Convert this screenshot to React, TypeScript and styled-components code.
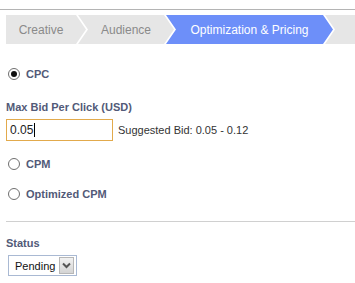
import React, { FC } from "react";
import styled, { createGlobalStyle } from "styled-components";

const GlobalStyle = createGlobalStyle`
  html, body {
    margin: 0;
    padding: 0;
    background: #ffffff;
    font-family: "Liberation Sans", Arial, sans-serif;
  }
`

const Page = styled.div`
  width: 355px;
  height: 283px;
  overflow: hidden;
  padding-top: 9px;
  box-sizing: border-box;
`

const TopRule = styled.div`
  height: 1px;
  background: #b4b4b4;
`

const TabBar = styled.div`
  display: flex;
  height: 29px;
  margin: 5px 0 0 6px;
`

const Tab = styled.div<{ $active?: boolean; $first?: boolean; $width?: number }>`
  display: flex;
  align-items: center;
  justify-content: center;
  box-sizing: border-box;
  height: 100%;
  flex: ${p => (p.$width ? `0 0 ${p.$width}px` : "1 1 auto")};
  margin-left: ${p => (p.$first ? "0" : "-8px")};
  padding: 0 10px 0 ${p => (p.$first ? "0" : "10px")};
  background: ${p => (p.$active ? "#6d8ff9" : "#e6e6e6")};
  color: ${p => (p.$active ? "#ffffff" : "#8a8a8a")};
  font-size: 12px;
  white-space: nowrap;
  clip-path: ${p =>
    p.$first
      ? "polygon(0 0, calc(100% - 10px) 0, 100% 50%, calc(100% - 10px) 100%, 0 100%)"
      : p.$width
      ? "polygon(0 0, calc(100% - 10px) 0, 100% 50%, calc(100% - 10px) 100%, 0 100%, 10px 50%)"
      : "polygon(0 0, 100% 0, 100% 100%, 0 100%, 10px 50%)"};
`

const Form = styled.div`
  display: flex;
  flex-direction: column;
  padding-left: 6px;
`

const RadioRow = styled.label<{ $top: number }>`
  display: flex;
  align-items: center;
  gap: 6px;
  height: 16px;
  margin-top: ${p => p.$top}px;
  padding-left: 2px;
`

const RadioMark = styled.span<{ $checked?: boolean }>`
  position: relative;
  box-sizing: border-box;
  width: 12px;
  height: 12px;
  border-radius: 50%;
  border: 1px solid #6f6f6f;
  background: #ffffff;

  &::after {
    content: "";
    display: ${p => (p.$checked ? "block" : "none")};
    position: absolute;
    left: 2px;
    top: 2px;
    width: 6px;
    height: 6px;
    border-radius: 50%;
    background: #111111;
  }
`

const Label = styled.span<{ $top?: number }>`
  display: block;
  margin-top: ${p => p.$top ?? 0}px;
  font-size: 11px;
  line-height: 14px;
  font-weight: 700;
  color: #525a78;
`

const BidRow = styled.div`
  display: flex;
  align-items: center;
  gap: 5px;
  margin-top: 5px;
`

const BidInput = styled.div`
  display: flex;
  align-items: center;
  box-sizing: border-box;
  width: 107px;
  height: 22px;
  padding-left: 3px;
  border: 1px solid #e2aa4c;
  font-size: 12px;
  color: #222222;
`

const Caret = styled.span`
  width: 1px;
  height: 14px;
  margin-left: 1px;
  background: #000000;
`

const Hint = styled.span`
  font-size: 11px;
  color: #333333;
`

const Divider = styled.div`
  height: 1px;
  margin-top: 19px;
  background: #d0d0d0;
`

const Select = styled.div`
  display: flex;
  align-items: center;
  gap: 4px;
  box-sizing: border-box;
  width: 69px;
  height: 21px;
  margin: 5px 0 0 2px;
  padding: 0 2px 0 6px;
  border: 1px solid #a9b9d3;
  font-size: 11px;
  color: #111111;
`

const SelectButton = styled.span`
  display: flex;
  align-items: center;
  justify-content: center;
  box-sizing: border-box;
  width: 17px;
  height: 17px;
  margin-left: auto;
  border: 1px solid #b7b7b7;
  background: linear-gradient(#f2f2f2, #d4d4d4);
`

const Chevron: FC = () => (
  <svg width="9" height="7" viewBox="0 0 9 7">
    <path d="M1 1.5 L4.5 5 L8 1.5" fill="none" stroke="#555555" strokeWidth="2" />
  </svg>
)

const Radio: FC<{ label: string; checked?: boolean; top: number }> = ({ label, checked, top }) => (
  <RadioRow $top={top}>
    <RadioMark $checked={checked} />
    <Label>{label}</Label>
  </RadioRow>
)

export default function App() {
  return (
    <Page>
      <GlobalStyle />
      <TopRule />
      <TabBar>
        <Tab $first $width={80}>Creative</Tab>
        <Tab $width={96}>Audience</Tab>
        <Tab $active $width={167}>Optimization &amp; Pricing</Tab>
        <Tab />
      </TabBar>
      <Form>
        <Radio label="CPC" checked top={22} />
        <Label $top={18}>Max Bid Per Click (USD)</Label>
        <BidRow>
          <BidInput>
            0.05
            <Caret />
          </BidInput>
          <Hint>Suggested Bid: 0.05 - 0.12</Hint>
        </BidRow>
        <Radio label="CPM" top={15} />
        <Radio label="Optimized CPM" top={14} />
        <Divider />
        <Label $top={14}>Status</Label>
        <Select>
          Pending
          <SelectButton>
            <Chevron />
          </SelectButton>
        </Select>
      </Form>
    </Page>
  )
}
